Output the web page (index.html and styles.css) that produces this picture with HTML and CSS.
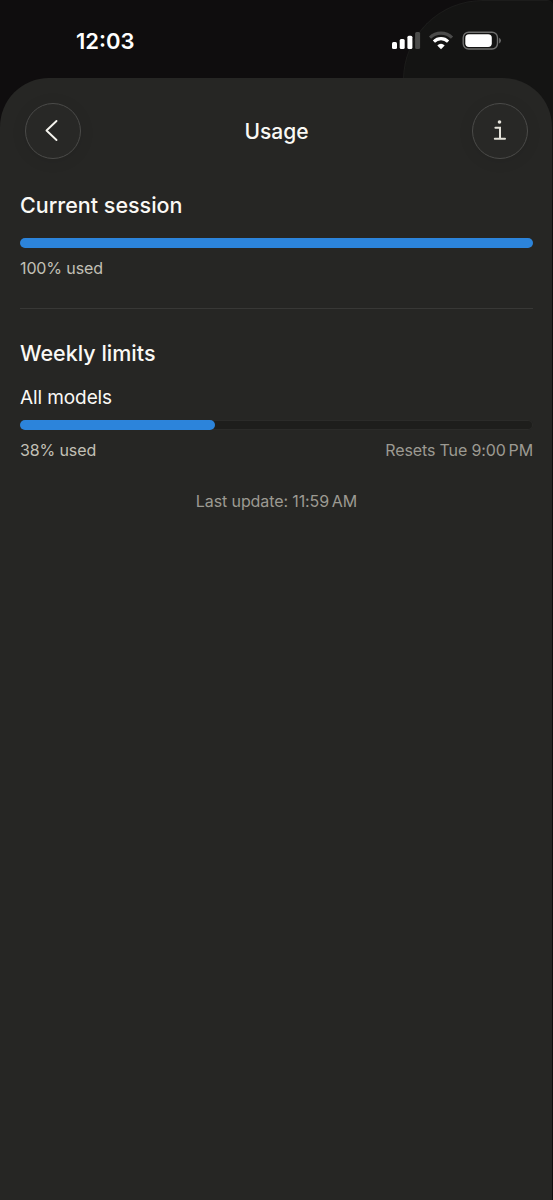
FILE: index.html
```html
<!DOCTYPE html>
<html lang="en">
<head>
    <meta charset="UTF-8">
    <meta name="viewport" content="width=device-width, initial-scale=1.0">
    <title>Usage</title>
    <link rel="stylesheet" href="styles.css">
</head>
<body>
    <!-- Edge of the screen behind the sheet -->
    <div class="back-card"></div>

    <!-- Status bar -->
    <div class="status-bar">
        <span class="time">12:03</span>
        <svg class="status-icons" width="110" height="20" viewBox="0 0 110 20">
            <g fill="#fff">
                <rect x="0" y="11" width="5" height="7" rx="1.5"/>
                <rect x="7.7" y="8" width="5" height="10" rx="1.5"/>
                <rect x="15.4" y="4.700" width="5" height="13.300" rx="1.500"/>
                <rect x="23.100" y="1" width="5" height="17" rx="1.500" fill="#4b4b4a"/>
            </g>
            <g fill="none" stroke-width="3.100">
                <path d="M38 6.700A15.500 15.500 0 0 1 60 6.700" stroke="#4b4b4a"/>
                <path d="M41.900 10.600A10 10 0 0 1 56.100 10.600" stroke="#fff"/>
            </g>
            <path d="M49 18.200L45.300 14.400A5.200 5.200 0 0 1 52.700 14.400Z" fill="#fff"/>
            <rect x="71.200" y="1.200" width="34.300" height="16.800" rx="5.500" fill="none" stroke="#6f6f6e" stroke-width="1.400"/>
            <rect x="73.300" y="3.200" width="26.500" height="12.800" rx="3.700" fill="#fff"/>
            <path d="M107.200 6.800A3.200 3.200 0 0 1 107.200 12.400Z" fill="#777776"/>
        </svg>
    </div>

    <!-- Usage sheet -->
    <main class="sheet">
        <header>
            <button class="round-button" aria-label="Back">
                <svg width="56" height="56" viewBox="0 0 56 56">
                    <path d="M31.500 18L21.500 27.500L31.500 37" fill="none" stroke="#f5f4ee" stroke-width="1.900" stroke-linecap="round" stroke-linejoin="round"/>
                </svg>
            </button>
            <h1>Usage</h1>
            <button class="round-button" aria-label="Info">
                <svg width="56" height="56" viewBox="0 0 56 56">
                    <circle cx="27.500" cy="19" r="1.800" fill="#e4e2da"/>
                    <path d="M23.400 24.800H28V35.500M22.800 35.700H33" fill="none" stroke="#e4e2da" stroke-width="2" stroke-linecap="round"/>
                </svg>
            </button>
        </header>

        <section class="session">
            <h2>Current session</h2>
            <div class="bar"><div class="bar-fill" style="width: 100%"></div></div>
            <div class="bar-info">
                <span class="used">100% used</span>
            </div>
        </section>

        <section class="weekly">
            <h2>Weekly limits</h2>
            <h3>All models</h3>
            <div class="bar"><div class="bar-fill" style="width: 38%"></div></div>
            <div class="bar-info">
                <span class="used">38% used</span>
                <span class="resets">Resets Tue 9:00&#8239;PM</span>
            </div>
        </section>

        <p class="updated">Last update: 11:59&#8239;AM</p>
    </main>
</body>
</html>
```

FILE: styles.css
```css
* {
    margin: 0;
    padding: 0;
    box-sizing: border-box;
    font-family: Inter, "Liberation Sans", sans-serif;
}

body {
    background-color: #0f0d0e;
    color: #faf9f5;
    height: 1200px;
    overflow: hidden;
    position: relative;
}

/* Rounded corner that shows behind the status bar */
.back-card {
    position: absolute;
    top: 0;
    left: 403px;
    width: 150px;
    height: 200px;
    background-color: #141413;
    border-left: 1px solid #1c1c1b;
    border-top: 1px solid #1c1c1b;
    border-radius: 80px 6px 0 0;
}

/* Status bar */
.status-bar {
    position: relative;
    display: flex;
    justify-content: space-between;
    align-items: center;
    height: 78px;
    padding: 4px 51px 0 76px;
}

.time {
    font-size: 22px;
    font-weight: 600;
    line-height: 26px;
    color: #fff;
}

.status-icons {
    display: block;
}

/* Sheet */
.sheet {
    position: relative;
    height: 1122px;
    margin-right: 1px;
    padding: 25px 19px 0 20px;
    background-color: #262624;
    border-radius: 49px 49px 0 0;
}

header {
    display: flex;
    justify-content: space-between;
    align-items: center;
    padding: 0 5px;
}

h1 {
    padding-top: 1px;
    font-size: 21px;
    font-weight: 500;
    line-height: 28px;
}

.round-button {
    width: 56px;
    height: 56px;
    border: 1px solid #4b4b49;
    border-radius: 50%;
    background-color: #282826;
    box-shadow: 0 2px 16px rgba(0, 0, 0, 0.08);
}

.round-button svg {
    display: block;
    margin: -1px;
}

h2 {
    font-size: 21.5px;
    font-weight: 500;
    line-height: 28px;
}

h3 {
    margin-top: 18px;
    font-size: 19px;
    font-weight: 400;
    line-height: 26px;
    letter-spacing: -0.1px;
}

/* Progress bars */
.bar {
    height: 10px;
    background-color: #1e1e1c;
    border-radius: 5px;
    box-shadow: inset 0 0 0 1px #2b2b29;
}

.bar-fill {
    height: 10px;
    background-color: #2c84db;
    border-radius: 5px;
}

.bar-info {
    display: flex;
    justify-content: space-between;
    margin-top: 8px;
    font-size: 16px;
    line-height: 24px;
    letter-spacing: -0.12px;
}

.used {
    color: #c2c0b6;
}

.resets,
.updated {
    color: #9c9a92;
}

.session {
    padding: 32px 0 28px;
    border-bottom: 1px solid #383836;
}

.session .bar {
    margin-top: 19px;
}

.weekly {
    padding-top: 30px;
}

.weekly .bar {
    margin-top: 9px;
}

.updated {
    margin-top: 27px;
    font-size: 16px;
    line-height: 24px;
    letter-spacing: -0.1px;
    text-align: center;
}
```
